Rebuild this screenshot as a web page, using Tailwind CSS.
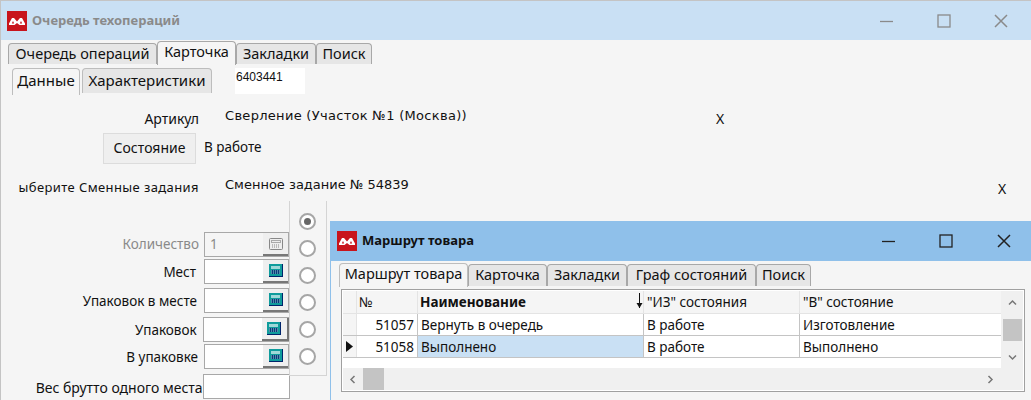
<!DOCTYPE html>
<html lang="ru">
<head>
  <meta charset="UTF-8" />
  <title>Очередь техопераций</title>
  <script src="https://cdn.jsdelivr.net/npm/@tailwindcss/browser@4"></script>
</head>
<body class="bg-[#f5f5f5]">
  <div class="relative w-[1031px] h-[400px] overflow-hidden bg-[#f5f5f5] border-t border-l border-[#c4c4c4] font-['Noto_Sans',sans-serif] text-[13.5px] text-[#111]">

    <!-- заголовок главного окна -->
    <div class="h-[39px] bg-[#c9e0f4] flex items-center pl-[6px]">
      <svg class="w-[20px] h-[20px] shrink-0" viewBox="0 0 20 20"><rect width="20" height="20" fill="#c8141c"/><path fill-rule="evenodd" d="M2 14V12.5L5 7H7L10 10.5L13 7H15L18 12.5V14H12.5L10 12L7.5 14ZM6 10L4.8 12.4H7.2ZM14 10L12.8 12.4H15.2Z" fill="#fff"/></svg>
      <span class="ml-[5px] text-[13px] font-bold text-[#8a8a8a]">Очередь техопераций</span>
      <div class="ml-auto flex items-center">
        <svg class="w-[13px] h-[14px]" viewBox="0 0 13 14"><path d="M0 7.5H13" stroke="#8a8a8a" stroke-width="1.3"/></svg>
        <svg class="w-[14px] h-[14px] ml-[44px]" viewBox="0 0 14 14"><rect x="1" y="1" width="12" height="12" fill="none" stroke="#8a8a8a" stroke-width="1.3"/></svg>
        <svg class="w-[14px] h-[14px] ml-[43px] mr-[23px]" viewBox="0 0 14 14"><path d="M1 1L13 13M13 1L1 13" stroke="#8a8a8a" stroke-width="1.5"/></svg>
      </div>
    </div>

    <!-- вкладки -->
    <div class="flex items-start h-[25px] pl-[7px] pt-[1px] text-[14.5px]">
      <div class="mt-[2px] w-[149px] h-[21px] bg-[#e6e6e6] border border-b-0 border-[#a8a8a8] rounded-t-[4px] text-center leading-[18px] whitespace-nowrap">Очередь операций</div>
      <div class="w-[79px] h-[24px] bg-[#f5f5f5] border border-b-0 border-[#a8a8a8] rounded-t-[4px] text-center leading-[19px]">Карточка</div>
      <div class="mt-[2px] w-[80px] h-[21px] bg-[#e6e6e6] border border-b-0 border-[#a8a8a8] rounded-t-[4px] text-center leading-[18px]">Закладки</div>
      <div class="mt-[2px] w-[56px] h-[21px] bg-[#e6e6e6] border border-b-0 border-[#a8a8a8] rounded-t-[4px] text-center leading-[18px]">Поиск</div>
    </div>

    <!-- подвкладки -->
    <div class="flex items-start h-[27px] mt-[3px] pl-[11px] text-[15px]">
      <div class="w-[68px] h-[27px] border border-b-0 border-[#bdbdbd] rounded-t-[4px] text-center leading-[23px]">Данные</div>
      <div class="ml-[2px] w-[130px] h-[25px] bg-[#e6e6e6] border border-b-0 border-[#bdbdbd] rounded-t-[4px] text-center leading-[23px] whitespace-nowrap">Характеристики</div>
      <div class="ml-[23px] w-[70px] h-[26px] bg-white text-[12px] font-['Liberation_Sans',sans-serif] leading-[18px] pl-[1px]">6403441</div>
    </div>

    <!-- строки карточки -->
    <div class="flex h-[22px] mt-[11px] items-start text-[13px] font-['DejaVu_Sans',sans-serif]">
      <div class="w-[198px] text-right pt-[2px] font-['Noto_Sans',sans-serif] text-[14px]">Артикул</div>
      <div class="ml-[26px] w-[491px] tracking-[0.3px] whitespace-nowrap">Сверление (Участок №1 (Москва))</div>
      <div class="pt-[2px] font-['Noto_Sans',sans-serif] text-[14px]">X</div>
    </div>
    <div class="flex items-center h-[31px] mt-[5px] pl-[102px]">
      <div class="w-[93px] h-[31px] bg-[#efefef] border border-[#dcdcdc] text-center leading-[28px] text-[14px]">Состояние</div>
      <div class="ml-[8px] -mt-[2px] text-[13.5px]">В работе</div>
    </div>
    <div class="flex h-[22px] mt-[11px] items-start text-[13px] font-['DejaVu_Sans',sans-serif]">
      <div class="w-[198px] text-right pt-[3px] font-['Noto_Sans',sans-serif] tracking-[0.4px] whitespace-nowrap">ыберите Сменные задания</div>
      <div class="ml-[26px] w-[773px] whitespace-nowrap">Сменное задание № 54839</div>
      <div class="pt-[3px] font-['Noto_Sans',sans-serif] text-[14px]">X</div>
    </div>

    <!-- поля и переключатели -->
    <div class="flex items-start mt-[5px] h-[204px]">
      <div class="w-[289px] pt-[30px]">
        <div class="flex h-[25px] items-center">
          <div class="w-[198px] text-right text-[#8a8a8a] -mt-[1px]">Количество</div>
          <div class="ml-[5px] w-[85px] h-[25px] border border-[#a8a8a8] bg-[#f5f5f5] flex items-center justify-between text-[#8a8a8a]">
            <span class="pl-[5px]">1</span>
            <span class="w-[25px] h-[23px] bg-[#efefef] border-b-2 border-[#777] flex items-center justify-center">
              <svg class="w-[14px] h-[12px]" viewBox="0 0 14 12"><rect x=".5" y=".5" width="13" height="11" rx="1" fill="#eee" stroke="#888"/><rect x="2.5" y="2.5" width="9" height="2" fill="none" stroke="#aaa"/><path d="M3 7h8M3 9h8" stroke="#888" stroke-dasharray="1 1"/></svg>
            </span>
          </div>
        </div>
        <div class="flex h-[25px] mt-[2px] items-center">
          <div class="w-[195px] text-right pt-[1px]">Мест</div>
          <div class="ml-[8px] w-[85px] h-[25px] border border-[#a8a8a8] bg-white flex items-center justify-end">
            <span class="w-[25px] h-[23px] bg-[#efefef] border-b-2 border-[#777] flex items-center justify-center">
              <svg class="w-[14px] h-[13px]" viewBox="0 0 14 13"><rect width="14" height="13" fill="#00246b"/><rect width="13" height="12" fill="#0f9c9c"/><rect x="2" y="2" width="9" height="3" fill="#9fd8d8"/><rect x="2" y="6" width="9" height="4" fill="#0a3a7a"/><path d="M2 7h9M2 9h9" stroke="#9fd8d8" stroke-dasharray="1 1"/></svg>
            </span>
          </div>
        </div>
        <div class="flex h-[25px] mt-[4px] items-center">
          <div class="w-[196px] text-right whitespace-nowrap pt-[1px]">Упаковок в месте</div>
          <div class="ml-[7px] w-[85px] h-[25px] border border-[#a8a8a8] bg-white flex items-center justify-end">
            <span class="w-[25px] h-[23px] bg-[#efefef] border-b-2 border-[#777] flex items-center justify-center">
              <svg class="w-[14px] h-[13px]" viewBox="0 0 14 13"><rect width="14" height="13" fill="#00246b"/><rect width="13" height="12" fill="#0f9c9c"/><rect x="2" y="2" width="9" height="3" fill="#9fd8d8"/><rect x="2" y="6" width="9" height="4" fill="#0a3a7a"/><path d="M2 7h9M2 9h9" stroke="#9fd8d8" stroke-dasharray="1 1"/></svg>
            </span>
          </div>
        </div>
        <div class="flex h-[25px] mt-[4px] items-center">
          <div class="w-[197px] text-right pt-[2px]">Упаковок</div>
          <div class="ml-[6px] w-[88px] h-[25px] border border-[#a8a8a8] bg-white flex items-center justify-end">
            <span class="w-[27px] h-[23px] bg-[#efefef] border-b-2 border-r-2 border-[#777] flex items-center justify-center">
              <svg class="w-[14px] h-[13px] -ml-[2px]" viewBox="0 0 14 13"><rect width="14" height="13" fill="#00246b"/><rect width="13" height="12" fill="#0f9c9c"/><rect x="2" y="2" width="9" height="3" fill="#9fd8d8"/><rect x="2" y="6" width="9" height="4" fill="#0a3a7a"/><path d="M2 7h9M2 9h9" stroke="#9fd8d8" stroke-dasharray="1 1"/></svg>
            </span>
          </div>
        </div>
        <div class="flex h-[25px] mt-[2px] items-center">
          <div class="w-[197px] text-right pt-[2px]">В упаковке</div>
          <div class="ml-[6px] w-[85px] h-[25px] border border-[#a8a8a8] bg-white flex items-center justify-end">
            <span class="w-[25px] h-[23px] bg-[#efefef] border-b-2 border-[#777] flex items-center justify-center">
              <svg class="w-[14px] h-[13px]" viewBox="0 0 14 13"><rect width="14" height="13" fill="#00246b"/><rect width="13" height="12" fill="#0f9c9c"/><rect x="2" y="2" width="9" height="3" fill="#9fd8d8"/><rect x="2" y="6" width="9" height="4" fill="#0a3a7a"/><path d="M2 7h9M2 9h9" stroke="#9fd8d8" stroke-dasharray="1 1"/></svg>
            </span>
          </div>
        </div>
        <div class="flex h-[25px] mt-[5px] items-center">
          <div class="w-[203px] text-right whitespace-nowrap text-[14px] pt-[2px]">Вес брутто одного места</div>
          <div class="w-[88px] h-[25px] border border-[#a8a8a8] bg-white"></div>
        </div>
      </div>
      <div class="-ml-[1px] w-[38px] h-[175px] border border-t-0 border-[#d4d4d4] bg-[#f5f5f5] flex flex-col items-center pt-[12px] pr-[1px] gap-[10px] -mt-[1px] relative">
        <span class="w-[17px] h-[17px] rounded-full border-2 border-[#a6a6a6] bg-white flex items-center justify-center"><span class="w-[7px] h-[7px] rounded-full bg-[#666]"></span></span>
        <span class="w-[17px] h-[17px] rounded-full border-2 border-[#a6a6a6] bg-white"></span>
        <span class="w-[17px] h-[17px] rounded-full border-2 border-[#a6a6a6] bg-white"></span>
        <span class="w-[17px] h-[17px] rounded-full border-2 border-[#a6a6a6] bg-white"></span>
        <span class="w-[17px] h-[17px] rounded-full border-2 border-[#a6a6a6] bg-white"></span>
        <span class="w-[17px] h-[17px] rounded-full border-2 border-[#a6a6a6] bg-white"></span>
      </div>
    </div>

    <!-- окно "Маршрут товара" -->
    <div class="absolute left-[329px] top-[220px] w-[701px] h-[179px] bg-[#f5f5f5] border-l border-[#8fc0ea]">
      <div class="h-[40px] bg-[#8fc0ea] flex items-center pl-[6px]">
        <svg class="w-[20px] h-[20px] shrink-0" viewBox="0 0 20 20"><rect width="20" height="20" fill="#c8141c"/><path fill-rule="evenodd" d="M2 14V12.5L5 7H7L10 10.5L13 7H15L18 12.5V14H12.5L10 12L7.5 14ZM6 10L4.8 12.4H7.2ZM14 10L12.8 12.4H15.2Z" fill="#fff"/></svg>
        <span class="ml-[5px] text-[13px] font-bold text-[#111]">Маршрут товара</span>
        <div class="ml-auto flex items-center">
          <svg class="w-[13px] h-[14px]" viewBox="0 0 13 14"><path d="M0 7.5H13" stroke="#222" stroke-width="1.3"/></svg>
          <svg class="w-[14px] h-[14px] ml-[44px]" viewBox="0 0 14 14"><rect x="1" y="1" width="12" height="12" fill="none" stroke="#222" stroke-width="1.3"/></svg>
          <svg class="w-[14px] h-[14px] ml-[44px] mr-[20px]" viewBox="0 0 14 14"><path d="M1 1L13 13M13 1L1 13" stroke="#222" stroke-width="1.5"/></svg>
        </div>
      </div>
      <div class="flex items-start h-[25px] pl-[8px] pt-[2px] text-[14.5px]">
        <div class="w-[129px] h-[24px] bg-[#f5f5f5] border border-b-0 border-[#bdbdbd] rounded-t-[4px] text-center leading-[18px] whitespace-nowrap">Маршрут товара</div>
        <div class="mt-[1px] w-[79px] h-[22px] bg-[#e6e6e6] border border-b-0 border-[#a8a8a8] rounded-t-[4px] text-center leading-[18px]">Карточка</div>
        <div class="mt-[1px] w-[80px] h-[22px] bg-[#e6e6e6] border border-b-0 border-[#a8a8a8] rounded-t-[4px] text-center leading-[18px]">Закладки</div>
        <div class="mt-[1px] w-[129px] h-[22px] bg-[#e6e6e6] border border-b-0 border-[#a8a8a8] rounded-t-[4px] text-center leading-[18px] whitespace-nowrap">Граф состояний</div>
        <div class="mt-[1px] w-[55px] h-[22px] bg-[#e6e6e6] border border-b-0 border-[#a8a8a8] rounded-t-[4px] text-center leading-[18px]">Поиск</div>
      </div>

      <!-- таблица -->
      <div class="ml-[10px] mt-[3px] w-[684px] h-[103px] border border-[#a0a0a0] bg-white p-[1px] flex">
        <div class="w-[660px] flex flex-col">
          <div class="flex h-[23px] bg-[#f5f5f5] border-b border-[#e4e4e4] leading-[22px]">
            <div class="w-[14px] border-r border-[#e4e4e4]"></div>
            <div class="w-[61px] pl-[2px] border-r border-[#e4e4e4]">№</div>
            <div class="relative w-[226px] pl-[2px] font-bold border-r border-[#e4e4e4]">Наименование
              <svg class="absolute right-0 top-[2px] w-[7px] h-[16px]" viewBox="0 0 7 16"><path d="M3.5 0V15" stroke="#111"/><path d="M0.5 10H6.5L3.5 15Z" fill="#111"/></svg>
            </div>
            <div class="w-[156px] pl-[3px] border-r border-[#e4e4e4]">"ИЗ" состояния</div>
            <div class="flex-1 pl-[3px]">"В" состояние</div>
          </div>
          <div class="flex h-[22px] border-b border-[#c4c4c4] leading-[22px]">
            <div class="w-[14px] bg-[#f5f5f5] border-r border-[#e4e4e4]"></div>
            <div class="w-[61px] pr-[3px] text-right border-r border-[#c4c4c4]">51057</div>
            <div class="w-[226px] pl-[3px] border-r border-[#c4c4c4]">Вернуть в очередь</div>
            <div class="w-[156px] pl-[3px] border-r border-[#c4c4c4]">В работе</div>
            <div class="flex-1 pl-[3px]">Изготовление</div>
          </div>
          <div class="flex h-[22px] border-b border-[#c4c4c4] leading-[22px]">
            <div class="w-[14px] bg-[#f5f5f5] border-r border-[#e4e4e4] flex items-center justify-center">
              <svg class="w-[7px] h-[11px]" viewBox="0 0 7 11"><path d="M0 0L7 5.5L0 11Z" fill="#111"/></svg>
            </div>
            <div class="w-[61px] pr-[3px] text-right border-r border-[#c4c4c4]">51058</div>
            <div class="w-[226px] pl-[3px] bg-[#c9e0f4] border-r border-[#c4c4c4]">Выполнено</div>
            <div class="w-[156px] pl-[3px] border-r border-[#c4c4c4]">В работе</div>
            <div class="flex-1 pl-[3px]">Выполнено</div>
          </div>
          <div class="h-[12px]"></div>
          <div class="h-[22px] bg-[#f0f0f0] flex items-center pl-[6px] pr-[7px]">
            <svg class="w-[7px] h-[9px]" viewBox="0 0 7 9"><path d="M5.5 1L2 4.5L5.5 8" fill="none" stroke="#777" stroke-width="1.5"/></svg>
            <div class="ml-[7px] w-[21px] h-[22px] bg-[#c4c4c4]"></div>
            <svg class="ml-auto w-[7px] h-[9px]" viewBox="0 0 7 9"><path d="M1.5 1L5 4.5L1.5 8" fill="none" stroke="#777" stroke-width="1.5"/></svg>
          </div>
        </div>
        <div class="w-[22px] bg-[#f0f0f0] flex flex-col items-center pt-[8px]">
          <svg class="w-[9px] h-[7px]" viewBox="0 0 9 7"><path d="M1 5.5L4.5 2L8 5.5" fill="none" stroke="#777" stroke-width="1.5"/></svg>
          <div class="mt-[13px] w-[19px] h-[22px] bg-[#c4c4c4]"></div>
          <svg class="mt-[13px] w-[9px] h-[7px]" viewBox="0 0 9 7"><path d="M1 1.5L4.5 5L8 1.5" fill="none" stroke="#777" stroke-width="1.5"/></svg>
        </div>
      </div>
    </div>
  </div>
</body>
</html>
